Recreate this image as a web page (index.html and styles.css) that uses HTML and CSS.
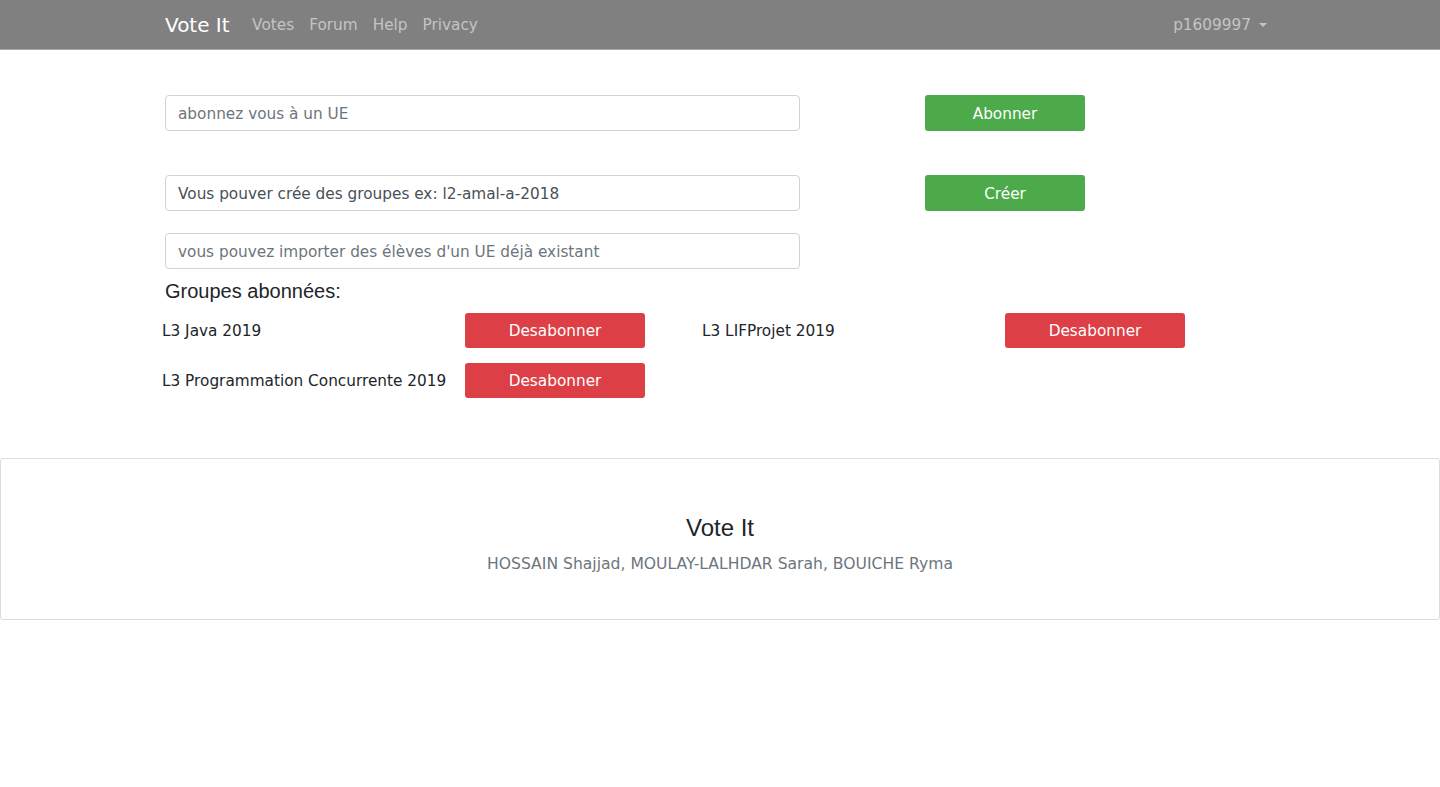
FILE: index.html
```html
<!DOCTYPE html>
<html lang="fr">
<head>
<meta charset="utf-8">
<title>Vote It</title>
<link rel="stylesheet" href="styles.css">
</head>
<body>
<header class="navbar">
  <div class="container nav-inner">
    <div class="nav-left">
      <a class="brand" href="#">Vote It</a>
      <nav class="nav-links">
        <a href="#">Votes</a>
        <a href="#">Forum</a>
        <a href="#">Help</a>
        <a href="#">Privacy</a>
      </nav>
    </div>
    <a class="user" href="#">p1609997<span class="caret"></span></a>
  </div>
</header>

<main class="container main">
  <div class="form-row row-first">
    <input class="field" type="text" placeholder="abonnez vous à un UE">
    <button class="btn btn-green">Abonner</button>
  </div>
  <div class="form-row row-second">
    <input class="field" type="text" value="Vous pouver crée des groupes ex: l2-amal-a-2018">
    <button class="btn btn-green">Créer</button>
  </div>
  <div class="form-row row-third">
    <input class="field" type="text" placeholder="vous pouvez importer des élèves d'un UE déjà existant">
  </div>

  <h5 class="section-title">Groupes abonnées:</h5>
  <div class="groups">
    <div class="group"><span class="group-name">L3 Java 2019</span><button class="btn btn-red">Desabonner</button></div>
    <div class="group"><span class="group-name">L3 LIFProjet 2019</span><button class="btn btn-red">Desabonner</button></div>
    <div class="group"><span class="group-name">L3 Programmation Concurrente 2019</span><button class="btn btn-red">Desabonner</button></div>
  </div>
</main>

<footer class="footer">
  <h4 class="footer-title">Vote It</h4>
  <p class="footer-authors">HOSSAIN Shajjad, MOULAY-LALHDAR Sarah, BOUICHE Ryma</p>
</footer>
</body>
</html>
```
FILE: styles.css
```css
* { box-sizing: border-box; }
html, body { margin: 0; padding: 0; }
body {
  font-family: "DejaVu Sans", Verdana, sans-serif;
  font-size: 15.3px;
  color: #212529;
  background: #fff;
}
.container {
  width: 1140px;
  margin: 0 auto;
  padding: 0 15px;
}
.navbar {
  background: #808080;
  height: 50px;
  border-bottom: 1px solid #a6a6a6;
}
.nav-inner {
  height: 49px;
  display: flex;
  align-items: center;
  justify-content: space-between;
  padding-top: 1px;
}
.nav-left { display: flex; align-items: center; }
.brand {
  color: #fff;
  text-decoration: none;
  font-size: 20px;
  margin-right: 15px;
}
.nav-links { display: flex; }
.nav-links a {
  color: #c4c4c4;
  text-decoration: none;
  padding: 0 7.5px;
  font-size: 15.3px;
}
.user {
  color: #c4c4c4;
  text-decoration: none;
  font-size: 15.3px;
  display: flex;
  align-items: center;
  margin-right: 8px;
}
.caret {
  display: inline-block;
  margin-left: 8px;
  border-top: 4px solid #c4c4c4;
  border-left: 4px solid transparent;
  border-right: 4px solid transparent;
}
.main { padding-top: 45px; }
.form-row {
  display: flex;
  align-items: center;
}
.row-second { margin-top: 44px; }
.row-third { margin-top: 22px; }
.field {
  width: 635px;
  height: 36px;
  border: 1px solid #ced4da;
  border-radius: 4px;
  padding: 2px 12px 0;
  font-family: "DejaVu Sans", Verdana, sans-serif;
  font-size: 15.3px;
  color: #495057;
  background: #fff;
}
.field::placeholder { color: #6c757d; }
.btn {
  border: none;
  border-radius: 3px;
  color: #fff;
  font-family: "DejaVu Sans", Verdana, sans-serif;
  font-size: 15.3px;
  cursor: pointer;
  padding: 1px 0 0;
}
.btn-green {
  background: #4caa4a;
  width: 160px;
  height: 36px;
  margin-left: 125px;
}
.btn-red {
  background: #dc3f45;
  width: 180px;
  height: 35px;
}
.section-title {
  font-family: "Liberation Sans", Arial, sans-serif;
  font-weight: normal;
  font-size: 20px;
  margin: 10px 0 0;
  line-height: 24px;
}
.groups {
  display: grid;
  grid-template-columns: 540px 540px;
  row-gap: 15px;
  margin-top: 10px;
  margin-left: -3px;
}
.group {
  display: flex;
  align-items: center;
}
.group-name {
  width: 303px;
  white-space: nowrap;
}
.footer {
  margin-top: 60px;
  border: 1px solid #dcdcdc;
  border-radius: 3px;
  height: 162px;
  text-align: center;
  padding-top: 55px;
}
.footer-title {
  font-family: "Liberation Sans", Arial, sans-serif;
  font-weight: normal;
  font-size: 24px;
  margin: 0;
  line-height: 28px;
  color: #212529;
}
.footer-authors {
  margin: 13px 0 0;
  color: #6c757d;
  font-size: 15.6px;
}
```
